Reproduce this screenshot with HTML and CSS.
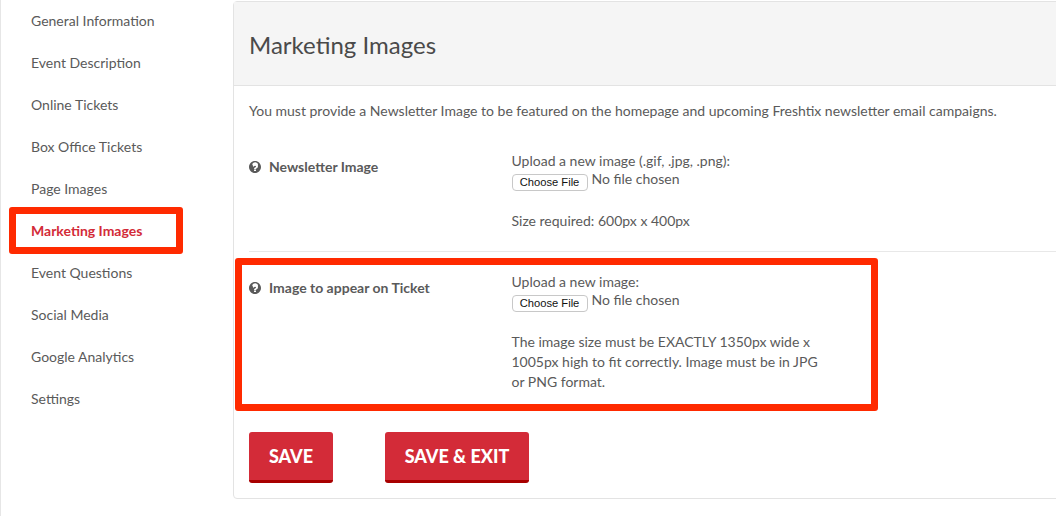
FILE: index.html
```html
<!DOCTYPE html>
<html lang="en">
<head>
<meta charset="utf-8">
<title>Marketing Images</title>
<link rel="stylesheet" href="styles.css">
</head>
<body>
<div class="page">
  <nav class="sidebar">
    <a class="nav-item">General Information</a>
    <a class="nav-item">Event Description</a>
    <a class="nav-item">Online Tickets</a>
    <a class="nav-item">Box Office Tickets</a>
    <a class="nav-item">Page Images</a>
    <a class="nav-item active">Marketing Images</a>
    <a class="nav-item">Event Questions</a>
    <a class="nav-item">Social Media</a>
    <a class="nav-item">Google Analytics</a>
    <a class="nav-item">Settings</a>
    <div class="callout callout-nav"></div>
  </nav>
  <main class="panel">
    <header class="panel-head"><h2>Marketing Images</h2></header>
    <p class="intro">You must provide a Newsletter Image to be featured on the homepage and upcoming Freshtix newsletter email campaigns.</p>
    <section class="row row-first">
      <div class="label">
        <svg class="help" viewBox="0 0 1536 1536"><path fill="currentColor" d="M768 0C344 0 0 344 0 768s344 768 768 768 768-344 768-768S1192 0 768 0zm128 1248q0 14-9 23t-23 9H672q-14 0-23-9t-9-23v-192q0-14 9-23t23-9h192q14 0 23 9t9 23v192zm243-480q-14 40-40 72t-58 55-62 41q-42 24-70 63-28 38-28 65 0 14-9 23t-23 9H672q-14 0-23-9t-9-23v-36q0-68 53-128t117-89q48-22 68-45t20-61q0-34-38-60t-87-26q-53 0-88 24-28 20-86 93-10 13-25 13-10 0-20-6L423 425q-11-8-13-21t5-24q128-213 372-213 64 0 129 25t117 66 85 101 33 125q0 52-12 94z"/></svg>
        <span>Newsletter Image</span>
      </div>
      <div class="field">
        <div>Upload a new image (.gif, .jpg, .png):</div>
        <input class="file" type="file">
        <p class="hint">Size required: 600px x 400px</p>
      </div>
    </section>
    <section class="row row-second">
      <div class="label">
        <svg class="help" viewBox="0 0 1536 1536"><path fill="currentColor" d="M768 0C344 0 0 344 0 768s344 768 768 768 768-344 768-768S1192 0 768 0zm128 1248q0 14-9 23t-23 9H672q-14 0-23-9t-9-23v-192q0-14 9-23t23-9h192q14 0 23 9t9 23v192zm243-480q-14 40-40 72t-58 55-62 41q-42 24-70 63-28 38-28 65 0 14-9 23t-23 9H672q-14 0-23-9t-9-23v-36q0-68 53-128t117-89q48-22 68-45t20-61q0-34-38-60t-87-26q-53 0-88 24-28 20-86 93-10 13-25 13-10 0-20-6L423 425q-11-8-13-21t5-24q128-213 372-213 64 0 129 25t117 66 85 101 33 125q0 52-12 94z"/></svg>
        <span>Image to appear on Ticket</span>
      </div>
      <div class="field">
        <div>Upload a new image:</div>
        <input class="file" type="file">
        <p class="hint hint-wrap">The image size must be EXACTLY 1350px wide x 1005px high to fit correctly. Image must be in JPG or PNG format.</p>
      </div>
      <div class="callout callout-ticket"></div>
    </section>
    <div class="actions">
      <button class="btn btn-save" type="button">SAVE</button>
      <button class="btn btn-exit" type="button">SAVE &amp; EXIT</button>
    </div>
  </main>
</div>
</body>
</html>
```
FILE: styles.css
```css
html, body {
  margin: 0;
  height: 516px;
  overflow: hidden;
  background: #fff;
}
body {
  font-family: Lato, "Open Sans", sans-serif;
  font-size: 14px;
  line-height: 20px;
  color: #5a5a5a;
}
.page {
  display: flex;
  width: 1056px;
  height: 516px;
  overflow: hidden;
}
.sidebar {
  position: relative;
  flex: 0 0 232px;
  border-left: 1px solid #e6e6e6;
  display: flex;
  flex-direction: column;
}
.nav-item {
  height: 42px;
  line-height: 42px;
  padding-left: 30px;
}
.nav-item.active {
  color: #d32b38;
  font-weight: 700;
}
.callout {
  position: absolute;
  box-sizing: border-box;
  border: 7px solid #ff2a00;
  border-radius: 3px;
  pointer-events: none;
}
.callout-nav {
  left: 8px;
  top: 207px;
  width: 174px;
  height: 47px;
}
.panel {
  flex: 0 0 auto;
  width: 860px;
  height: 498px;
  margin-top: 1px;
  box-sizing: border-box;
  border: 1px solid #e3e3e3;
  border-radius: 4px;
  display: flex;
  flex-direction: column;
}
.panel-head {
  height: 84px;
  flex: none;
  box-sizing: border-box;
  background: #f5f5f5;
  border-bottom: 1px solid #e3e3e3;
  padding: 2px 15px 0;
  display: flex;
  align-items: center;
}
.panel-head h2 {
  margin: 0;
  font-size: 24px;
  font-weight: 400;
  color: #4a4a4a;
}
.intro {
  margin: 15px 15px 0;
}
.row {
  position: relative;
  display: flex;
  margin-left: 15px;
}
.row-first {
  margin-top: 30px;
  height: 100px;
  border-bottom: 1px solid #e8e8e8;
}
.row-second {
  padding-top: 20px;
  height: 153px;
  box-sizing: border-box;
}
.label {
  flex: 0 0 263px;
  display: flex;
  align-items: center;
  gap: 8px;
  height: 20px;
  margin-top: 6px;
  font-weight: 700;
}
.help {
  width: 12px;
  height: 12px;
  flex: none;
}
.field {
  width: 320px;
  margin-left: -0.5px;
}
.file {
  display: block;
  width: 300px;
  height: 23px;
  margin: -1px 0 0;
  padding: 0;
  font-family: Lato, sans-serif;
  font-size: 14px;
  color: #5a5a5a;
}
.file::file-selector-button {
  width: 76px;
  height: 17px;
  margin: 0 4px 0 0;
  padding: 0;
  vertical-align: -2px;
  background: #fff;
  border: 1px solid #c8c8c8;
  border-radius: 4px;
  font-family: "Liberation Sans", sans-serif;
  font-size: 11.2px;
  color: #111;
}
.hint {
  margin: 18px 0 0;
}
.callout-ticket {
  left: -14px;
  top: 6px;
  width: 643px;
  height: 153px;
}
.actions {
  display: flex;
  gap: 52px;
  margin: 27px 0 0 15px;
}
.btn {
  height: 51px;
  padding: 0;
  border: 0;
  border-bottom: 3px solid #a80000;
  border-radius: 3px;
  background: #d32b38;
  color: #fff;
  font-family: Lato, sans-serif;
  font-size: 18px;
  font-weight: 900;
}
.btn-save {
  width: 84px;
}
.btn-exit {
  width: 144px;
}
```
